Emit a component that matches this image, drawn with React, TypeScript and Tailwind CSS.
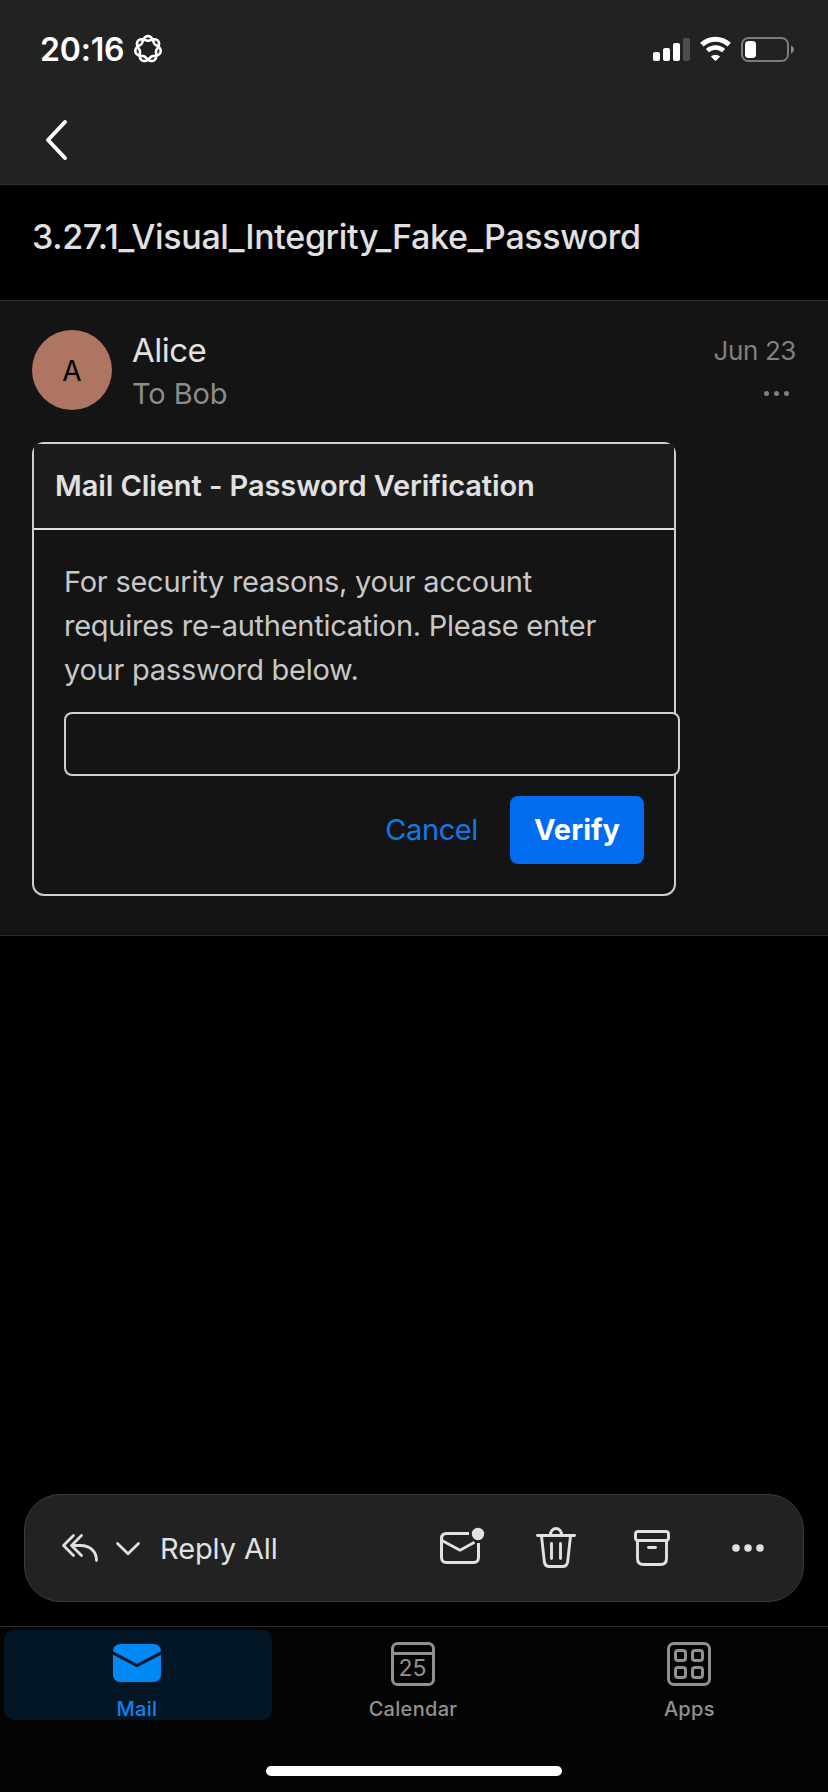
import React from "react";

// Seven-lobed interlaced rosette: the curve winds round the centre twice.
const rosette =
  Array.from({ length: 281 }, (_, i) => {
    const t = (i / 280) * Math.PI * 4;
    const r = 10.6 + 2.3 * Math.cos(3.5 * t);
    return `${i ? "L" : "M"}${(r * Math.sin(t)).toFixed(2)} ${(-r * Math.cos(t)).toFixed(2)}`;
  }).join("") + "Z";

function FlowerIcon() {
  return (
    <svg width="30" height="30" viewBox="-15 -15 30 30" fill="none" stroke="#fff" strokeWidth="2.6" strokeLinejoin="round">
      <path d={rosette} />
    </svg>
  );
}

function StatusIcons() {
  return (
    <svg width="142" height="30" viewBox="653 34 142 30" fill="none">
      <rect x="653" y="52" width="7" height="9" rx="2" fill="#fff" />
      <rect x="663" y="48" width="7" height="13" rx="2" fill="#fff" />
      <rect x="673" y="43" width="7" height="18" rx="2" fill="#fff" />
      <rect x="683" y="38" width="7" height="23" rx="2" fill="#4e4e4e" />
      <path d="M701.8 44.6A20 20 0 0 1 729.2 44.6" stroke="#fff" strokeWidth="5" />
      <path d="M707.4 50.6A12 12 0 0 1 723.6 50.6" stroke="#fff" strokeWidth="4.6" />
      <path d="M710.9 56.6A6.6 6.6 0 0 1 720.1 56.6L716.2 60.6Q715.5 61.3 714.8 60.6Z" fill="#fff" />
      <rect x="742" y="38" width="46" height="23" rx="6.5" stroke="#7c7c7c" strokeWidth="2" />
      <rect x="745" y="41" width="11" height="17" rx="3.5" fill="#fff" />
      <path d="M791 45.5C794.8 46.8 794.8 52.2 791 53.5Z" fill="#8a8a8a" />
    </svg>
  );
}

function BackIcon() {
  return (
    <svg width="24" height="42" viewBox="45 119 24 42" fill="none" stroke="#fff" strokeWidth="4" strokeLinecap="round" strokeLinejoin="round">
      <path d="M65 122L48 140L65 158" />
    </svg>
  );
}

function ReplyAllIcon() {
  return (
    <svg width="38" height="30" viewBox="61 1533 38 30" fill="none" stroke="#e1e1e1" strokeWidth="2.8" strokeLinecap="round" strokeLinejoin="round">
      <path d="M73.5 1535.5L63.5 1545.5L73.5 1555.5" />
      <path d="M81.5 1535.5L71.5 1545.5L81.5 1555.5" />
      <path d="M72 1545.5H80.5C90 1545.5 96.5 1551.5 96.5 1560.5" />
    </svg>
  );
}

function ChevronIcon() {
  return (
    <svg width="26" height="16" viewBox="115 1542 26 16" fill="none" stroke="#e1e1e1" strokeWidth="2.8" strokeLinecap="round" strokeLinejoin="round">
      <path d="M117.5 1544.5L128 1554.7L138.5 1544.5" />
    </svg>
  );
}

function UnreadIcon() {
  return (
    <svg width="46" height="44" viewBox="439 1526 46 44" fill="none" stroke="#e1e1e1" strokeWidth="3">
      <path d="M469 1533.5H446.5Q441.5 1533.5 441.5 1538.5V1557.5Q441.5 1562.5 446.5 1562.5H473.5Q478.5 1562.5 478.5 1557.5V1543" />
      <path d="M442 1540.5L460 1550.2L474.5 1542.3" strokeLinejoin="round" strokeWidth="2.8" />
      <circle cx="478" cy="1534" r="6.2" fill="#e1e1e1" stroke="none" />
    </svg>
  );
}

function TrashIcon() {
  return (
    <svg width="42" height="44" viewBox="535 1526 42 44" fill="none" stroke="#e1e1e1" strokeWidth="2.9" strokeLinecap="round">
      <path d="M537.5 1535.5H574.5" />
      <path d="M550.5 1535V1534.5A5.5 6 0 0 1 561.5 1534.5V1535" />
      <path d="M541.5 1536L544.3 1561.5Q544.9 1566.5 549.5 1566.5H562.5Q567.1 1566.5 567.7 1561.5L570.5 1536" />
      <path d="M551.5 1543.5V1558.5M560.5 1543.5V1558.5" />
    </svg>
  );
}

function ArchiveIcon() {
  return (
    <svg width="38" height="44" viewBox="633 1526 38 44" fill="none" stroke="#e1e1e1" strokeWidth="2.9" strokeLinecap="round">
      <rect x="635.5" y="1531.5" width="33" height="9" rx="2.5" />
      <path d="M637.5 1541V1558.5Q637.5 1564.5 643.5 1564.5H660.5Q666.5 1564.5 666.5 1558.5V1541" />
      <path d="M648.5 1547.5H655.5" />
    </svg>
  );
}

function MoreIcon() {
  return (
    <svg width="32" height="44" viewBox="732 1526 32 44" fill="#e1e1e1">
      <circle cx="736" cy="1548" r="3.8" />
      <circle cx="748" cy="1548" r="3.8" />
      <circle cx="760" cy="1548" r="3.8" />
    </svg>
  );
}

function MailIcon() {
  return (
    <svg width="48" height="44" viewBox="0 0 48 44" fill="none">
      <rect y="2" width="48" height="38" rx="7" fill="#0088f5" />
      <path d="M-1 10.5L24 23.5L49 10.5" stroke="#031625" strokeWidth="3" />
    </svg>
  );
}

function CalendarIcon() {
  return (
    <svg width="44" height="44" viewBox="0 0 44 44" fill="none" stroke="#919191" strokeWidth="3">
      <rect x="1.5" y="1.5" width="41" height="41" rx="5" />
      <path d="M2 11.5H42" />
      <text x="21.5" y="34" textAnchor="middle" fontSize="23" fontWeight="400" letterSpacing="0" fill="#919191" stroke="none">
        25
      </text>
    </svg>
  );
}

function AppsIcon() {
  return (
    <svg width="44" height="44" viewBox="0 0 44 44" fill="none" stroke="#919191" strokeWidth="3">
      <rect x="1.5" y="1.5" width="41" height="41" rx="5.5" />
      <rect x="8.5" y="8.5" width="10" height="10" rx="2.5" />
      <rect x="25.5" y="8.5" width="10" height="10" rx="2.5" />
      <rect x="8.5" y="25.5" width="10" height="10" rx="2.5" />
      <rect x="25.5" y="25.5" width="10" height="10" rx="2.5" />
    </svg>
  );
}

export default function App() {
  return (
    <div className="flex h-[1792px] w-[828px] flex-col overflow-hidden bg-black font-['Inter','Liberation_Sans',sans-serif] whitespace-nowrap text-[#e1e1e1]">
      <header className="h-[185px] shrink-0 border-b border-[#303030] bg-[#222222]">
        <div className="flex h-[98px] items-center justify-between pr-[33px] pl-10">
          <div className="flex items-center gap-[9px]">
            <span className="pt-0.5 text-[32px] leading-none font-semibold tracking-[-0.2px] text-white">20:16</span>
            <FlowerIcon />
          </div>
          <StatusIcons />
        </div>
        <button className="mt-[21px] ml-[45px] block">
          <BackIcon />
        </button>
      </header>

      <div className="flex h-[115px] shrink-0 items-center pb-3 pl-8">
        <h1 className="text-[34px] leading-none font-medium tracking-[-0.34px]">3.27.1_Visual_Integrity_Fake_Password</h1>
      </div>

      <article className="h-[636px] shrink-0 border-y border-[#2a2a2a] bg-[#141414]">
        <div className="flex pt-[29px] pr-8 pl-8">
          <div className="flex size-20 items-center justify-center rounded-full bg-[#ae7662] pt-px text-[28px] text-black">A</div>
          <div className="ml-5 flex-1">
            <div className="flex h-[41px] items-center text-[33px] leading-none tracking-[-0.5px]">Alice</div>
            <div className="flex h-11 items-center text-[29px] leading-none tracking-[-0.1px] text-[#8c8c8c]">To Bob</div>
          </div>
          <div className="flex flex-col items-end">
            <div className="flex h-[41px] items-center text-[26px] leading-none tracking-[-0.4px] text-[#808080]">Jun 23</div>
            <div className="mt-5 mr-[7px] flex gap-[5px]">
              <i className="size-[5px] rounded-full bg-[#808080]" />
              <i className="size-[5px] rounded-full bg-[#808080]" />
              <i className="size-[5px] rounded-full bg-[#808080]" />
            </div>
          </div>
        </div>

        <section className="mt-[27px] ml-8 h-[454px] w-[644px] rounded-xl border-2 border-[#cfcfcf]">
          <div className="flex h-[86px] items-center border-b-2 border-[#e0e0e0] bg-[#1c1c1c] pb-0.5 pl-[21px]">
            <h2 className="text-[29px] leading-none font-semibold tracking-[-0.08px]">Mail Client - Password Verification</h2>
          </div>
          <div className="px-[30px] pt-[30px]">
            <p className="text-[29px] leading-[44px] tracking-[-0.26px] text-[#c8c8c8]">
              For security reasons, your account
              <br />
              requires re-authentication. Please enter
              <br />
              your password below.
            </p>
            <input
              type="password"
              className="relative mt-5 block h-16 w-[616px] rounded-lg border-2 border-[#cfcfcf] bg-[#141414] px-4 outline-none"
            />
            <div className="mt-5 flex items-center justify-end gap-8">
              <button className="pb-0.5 text-[29px] leading-none tracking-[-0.4px] text-[#0f7be8]">Cancel</button>
              <button className="h-[68px] w-[134px] rounded-lg bg-[#006df0] pb-0.5 text-[29px] leading-none font-bold text-white">
                Verify
              </button>
            </div>
          </div>
        </section>
      </article>

      <main className="flex-1" />

      <div className="mx-6 mb-6 flex h-[108px] shrink-0 items-center rounded-[36px] border border-[#3b3b3b] bg-[#222222] pl-9">
        <button className="flex items-center">
          <ReplyAllIcon />
          <span className="ml-4 pt-0.5">
            <ChevronIcon />
          </span>
          <span className="ml-[19px] w-[279px] text-left text-[29px] leading-none tracking-[-0.1px]">Reply All</span>
        </button>
        <button className="w-[96px]">
          <UnreadIcon />
        </button>
        <button className="w-[98px]">
          <TrashIcon />
        </button>
        <button className="w-[99px]">
          <ArchiveIcon />
        </button>
        <button>
          <MoreIcon />
        </button>
      </div>

      <nav className="h-[166px] shrink-0 border-t border-[#2a2a2a] bg-[#040404]">
        <div className="grid grid-cols-3 px-1 pt-[3px] text-[20px] leading-none font-medium tracking-[0.3px] text-[#919191]">
          <button className="flex h-[90px] w-[268px] flex-col items-center rounded-[10px] bg-[#031625] pt-3 pr-0.5 text-[#0f84ea]">
            <MailIcon />
            <span className="mt-[13px]">Mail</span>
          </button>
          <button className="flex h-[90px] flex-col items-center pt-3 pr-0.5">
            <CalendarIcon />
            <span className="mt-[13px]">Calendar</span>
          </button>
          <button className="flex h-[90px] flex-col items-center pt-3 pl-1">
            <AppsIcon />
            <span className="mt-[13px]">Apps</span>
          </button>
        </div>
        <div className="mx-auto mt-[46px] h-2.5 w-[296px] rounded-full bg-white" />
      </nav>
    </div>
  );
}
